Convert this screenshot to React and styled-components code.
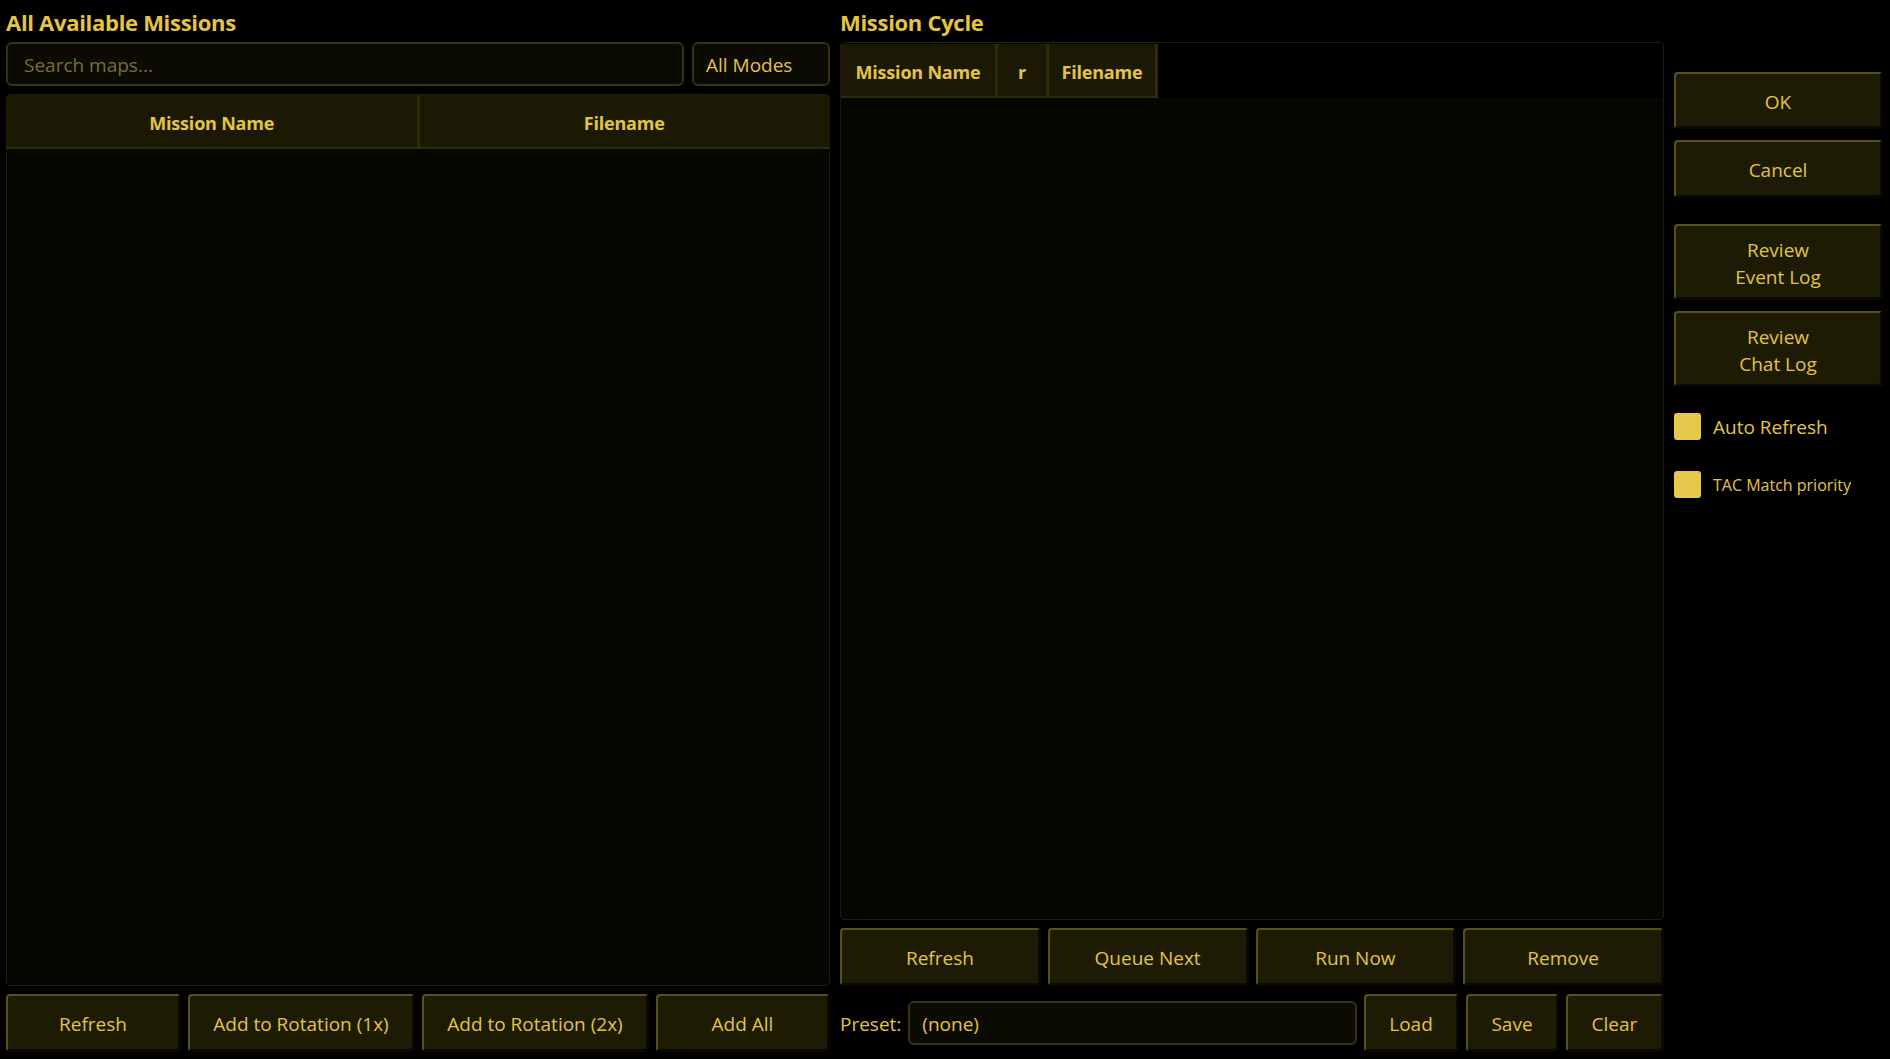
import React from "react";
import styled, { createGlobalStyle } from "styled-components";

const colors = {
  bg: "#000000",
  text: "#e4c443",
  dim: "#7c7028",
  btn: "#1d1b04",
  btnLight: "#57521a",
  btnDark: "#0a0901",
  field: "#0b0b04",
  fieldLine: "#36330f",
  panel: "#060601",
  panelLine: "#1f1d08",
  head: "#1b1903",
  headLine: "#2e2b09",
  check: "#e6c84a",
};

const font = `"Open Sans", "Noto Sans", sans-serif`;

const GlobalStyle = createGlobalStyle`
  html, body { margin: 0; padding: 0; background: ${colors.bg}; }
  body { font-family: ${font}; color: ${colors.text}; }
  * { box-sizing: border-box; }
`;

const Page = styled.div`
  display: flex;
  height: 1059px;
  padding: 0 7px 7px 6px;
  gap: 10px;
`;

const Column = styled.div`
  display: flex;
  flex-direction: column;
  width: ${(p) => p.w}px;
  flex-shrink: 0;
`;

const Title = styled.h2`
  margin: 0;
  height: 42px;
  line-height: 44px;
  font-size: 22px;
  font-weight: 700;
  letter-spacing: -0.3px;
  color: ${colors.text};
`;

const Row = styled.div`
  display: flex;
  align-items: center;
  gap: ${(p) => p.gap ?? 7}px;
  margin-top: ${(p) => p.mt ?? 0}px;
  height: ${(p) => p.h}px;
  flex-shrink: 0;
`;

const Field = styled.div`
  height: 44px;
  flex: ${(p) => (p.w ? `0 0 ${p.w}px` : 1)};
  display: flex;
  align-items: center;
  padding: 2px ${(p) => p.pad ?? 16}px 0;
  background: ${colors.field};
  border: 2px solid ${colors.fieldLine};
  border-radius: 6px;
  font-size: 19px;
  color: ${(p) => (p.placeholder ? colors.dim : colors.text)};
`;

const Button = styled.button`
  flex: ${(p) => (p.block ? "none" : p.w ? `0 0 ${p.w}px` : 1)};
  height: ${(p) => p.h ?? 58}px;
  width: ${(p) => (p.w ? `${p.w}px` : "auto")};
  background: ${colors.btn};
  border-style: solid;
  border-width: 2px 3px 3px 2px;
  border-color: ${colors.btnLight} ${colors.btnDark} ${colors.btnDark} ${colors.btnLight};
  border-radius: 4px;
  color: ${colors.text};
  font-family: ${font};
  font-size: 19px;
  line-height: 27px;
  padding: 4px 0 0;
  cursor: pointer;
`;

const Table = styled.div`
  display: flex;
  flex-direction: column;
  flex: 1;
  margin-top: ${(p) => p.mt ?? 8}px;
  background: ${(p) => (p.dark ? colors.bg : colors.panel)};
  border: 1px solid ${colors.panelLine};
  border-radius: 4px;
  overflow: hidden;
`;

const HeadRow = styled.div`
  display: flex;
  height: ${(p) => p.h}px;
  margin-top: ${(p) => p.mt ?? 0}px;
  flex-shrink: 0;
  background: ${(p) => (p.fill ? colors.head : colors.bg)};
`;

const HeadCell = styled.div`
  flex: ${(p) => (p.w ? `0 0 ${p.w}px` : 1)};
  display: flex;
  align-items: center;
  justify-content: center;
  padding-top: 4px;
  background: ${colors.head};
  border-right: 3px solid ${colors.headLine};
  border-bottom: 2px solid ${colors.headLine};
  font-size: 18px;
  font-weight: 700;
  letter-spacing: -0.2px;
  &:last-child {
    border-right: ${(p) => (p.open ? `3px solid ${colors.headLine}` : "none")};
  }
`;

const Body = styled.div`
  flex: 1;
  background: ${colors.panel};
`;

const Label = styled.span`
  font-size: 19px;
  padding-top: 2px;
`;

const Side = styled.div`
  display: flex;
  flex-direction: column;
  padding-top: 72px;
`;

const Spacer = styled.div`
  height: ${(p) => p.h}px;
  flex-shrink: 0;
`;

const Check = styled.label`
  display: flex;
  align-items: center;
  gap: 12px;
  height: 27px;
  font-size: ${(p) => p.size}px;
  color: ${colors.text};
`;

const Box = styled.span`
  width: 27px;
  height: 27px;
  flex-shrink: 0;
  background: ${colors.check};
  border-radius: 3px;
`;

export default function App() {
  return (
    <>
      <GlobalStyle />
      <Page>
        <Column w={824}>
          <Title>All Available Missions</Title>
          <Row h={44} gap={8}>
            <Field placeholder>Search maps...</Field>
            <Field w={138} pad={12}>All Modes</Field>
          </Row>
          <Table>
            <HeadRow h={54} fill>
              <HeadCell>Mission Name</HeadCell>
              <HeadCell>Filename</HeadCell>
            </HeadRow>
            <Body />
          </Table>
          <Row h={58} mt={8}>
            <Button w={175}>Refresh</Button>
            <Button w={227}>Add to Rotation (1x)</Button>
            <Button w={227}>Add to Rotation (2x)</Button>
            <Button>Add All</Button>
          </Row>
        </Column>

        <Column w={824}>
          <Title>Mission Cycle</Title>
          <Table mt={0} dark>
            <HeadRow h={54} mt={1}>
              <HeadCell w={157}>Mission Name</HeadCell>
              <HeadCell w={51}>r</HeadCell>
              <HeadCell w={109} open>Filename</HeadCell>
            </HeadRow>
            <Body />
          </Table>
          <Row h={58} mt={8}>
            <Button>Refresh</Button>
            <Button>Queue Next</Button>
            <Button>Run Now</Button>
            <Button>Remove</Button>
          </Row>
          <Row h={59} mt={7} gap={7}>
            <Label>Preset:</Label>
            <Field pad={12}>(none)</Field>
            <Button w={95}>Load</Button>
            <Button w={93}>Save</Button>
            <Button w={98}>Clear</Button>
          </Row>
        </Column>

        <Column w={209}>
          <Side>
            <Button block h={57}>OK</Button>
            <Spacer h={11} />
            <Button block h={58}>Cancel</Button>
            <Spacer h={26} />
            <Button block h={76}>
              Review
              <br />
              Event Log
            </Button>
            <Spacer h={11} />
            <Button block h={76}>
              Review
              <br />
              Chat Log
            </Button>
            <Spacer h={26} />
            <Check size={19}>
              <Box />
              Auto Refresh
            </Check>
            <Spacer h={31} />
            <Check size={16}>
              <Box />
              TAC Match priority
            </Check>
          </Side>
        </Column>
      </Page>
    </>
  );
}
